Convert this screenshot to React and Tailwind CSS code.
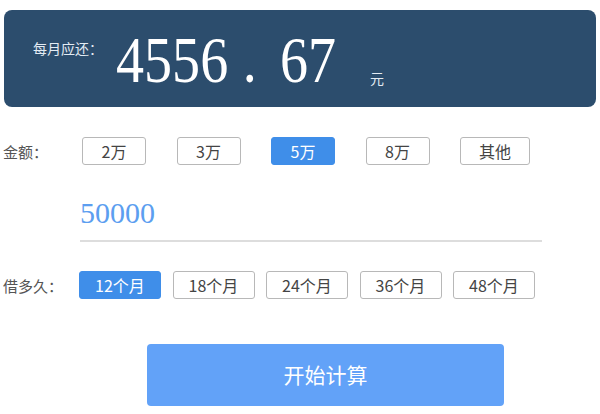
import { useState } from 'react';

const amounts = ['2万', '3万', '5万', '8万', '其他'];
const terms = ['12个月', '18个月', '24个月', '36个月', '48个月'];

const cjk = "font-[family-name:'Noto_Sans_CJK_SC',sans-serif]";
const serif = "font-[family-name:'Liberation_Serif','Noto_Sans_CJK_SC',serif]";

function Choice({ label, active, onClick, width }) {
  return (
    <button
      type="button"
      onClick={onClick}
      className={`${width} h-[28px] rounded-[3px] border text-[16px] leading-none ${cjk} ${
        active
          ? 'border-[#3f8ee9] bg-[#3f8ee9] text-white'
          : 'border-[#b8b8b8] bg-white text-[#444]'
      }`}
    >
      {label}
    </button>
  );
}

export default function App() {
  const [amount, setAmount] = useState('5万');
  const [term, setTerm] = useState('12个月');

  return (
    <div className="h-[414px] w-[600px] overflow-hidden bg-white">
      {/* 结果卡片 */}
      <div className="mx-[4px] mt-[10px] flex h-[97px] items-start rounded-[8px] bg-[#2c4d6d] pl-[29px] text-white">
        <span className={`mt-[31px] w-[70px] whitespace-nowrap text-[14px] leading-none text-[#e4ecf4] ${cjk}`}>
          每月应还：
        </span>
        <div className="ml-[13px] mt-[17px] w-[222px]">
          <span className={`inline-block origin-left scale-x-[0.85] whitespace-nowrap text-[66px] leading-none ${serif}`}>
            4556<span className="inline-block w-[61px] pl-[17px]">.</span>67
          </span>
        </div>
        <span className={`ml-[32px] mt-[61px] text-[14px] leading-none text-[#e4ecf4] ${cjk}`}>元</span>
      </div>

      {/* 金额 */}
      <div className="mt-[30px] flex items-center pl-[3px]">
        <span className={`w-[79px] text-[15px] leading-none text-[#555] ${cjk}`}>金额：</span>
        <div className="flex gap-[30.5px]">
          {amounts.map((a) => (
            <Choice
              key={a}
              label={a}
              active={amount === a}
              onClick={() => setAmount(a)}
              width={a === '其他' ? 'w-[70px]' : 'w-[64px]'}
            />
          ))}
        </div>
      </div>

      <div className="ml-[80px] mt-[33px] w-[462px] border-b-2 border-[#dddddd] pb-[12px]">
        <span className={`block text-[30px] leading-none text-[#5c9ef0] ${serif}`}>50000</span>
      </div>

      {/* 借多久 */}
      <div className="mt-[29px] flex items-center pl-[3px]">
        <span className={`w-[76px] text-[15px] leading-none text-[#555] ${cjk}`}>借多久：</span>
        <div className="flex gap-[11.5px]">
          {terms.map((t) => (
            <Choice key={t} label={t} active={term === t} onClick={() => setTerm(t)} width="w-[82px]" />
          ))}
        </div>
      </div>

      <button
        type="button"
        className={`ml-[147px] mt-[45px] h-[62px] w-[357px] rounded-[4px] bg-[#62a2f8] text-[21px] text-white ${cjk}`}
      >
        开始计算
      </button>
    </div>
  );
}
